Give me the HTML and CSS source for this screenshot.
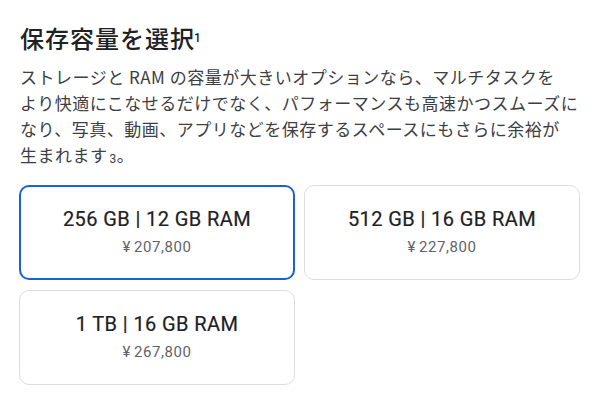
FILE: index.html
```html
<!DOCTYPE html>
<html lang="ja">
<head>
    <meta charset="UTF-8">
    <meta name="viewport" content="width=device-width, initial-scale=1.0">
    <title>保存容量を選択</title>
    <link rel="stylesheet" href="styles.css">
</head>
<body>
    <div class="storage">
        <h2 class="title">保存容量を選択<sup>1</sup></h2>
        <p class="desc">ストレージと RAM の容量が大きいオプションなら、マルチタスクを<br>より快適にこなせるだけでなく、パフォーマンスも高速かつスムーズに<br>なり、写真、動画、アプリなどを保存するスペースにもさらに余裕が<br>生まれます<sup>3</sup>。</p>
        <div class="options">
            <div class="option selected">
                <div class="name">256 GB | 12 GB RAM</div>
                <div class="price"><span class="yen">¥</span>207,800</div>
            </div>
            <div class="option">
                <div class="name">512 GB | 16 GB RAM</div>
                <div class="price"><span class="yen">¥</span>227,800</div>
            </div>
            <div class="option">
                <div class="name">1 TB | 16 GB RAM</div>
                <div class="price"><span class="yen">¥</span>267,800</div>
            </div>
        </div>
    </div>
</body>
</html>
```

FILE: styles.css
```css
body {
    margin: 0;
    background-color: #ffffff;
    font-family: Roboto, "Noto Sans CJK JP", sans-serif;
    color: #202124;
}
.storage {
    padding: 20px 18px 0 19px;
}
.title {
    margin: 0 0 0 1px;
    font-family: "Noto Sans CJK JP", sans-serif;
    font-size: 24px;
    font-weight: 500;
    line-height: 36px;
    letter-spacing: 1px;
}
.title sup {
    font-family: Roboto, sans-serif;
    font-size: 12px;
    vertical-align: 6px;
    line-height: 0;
    letter-spacing: 0;
    margin-left: -1px;
}
.desc {
    margin: 8px 0 0 1px;
    font-family: "Noto Sans CJK JP", sans-serif;
    font-size: 17px;
    line-height: 26px;
    letter-spacing: 0.5px;
    color: #3c4043;
    white-space: nowrap;
}
.desc sup {
    font-family: Roboto, sans-serif;
    font-size: 12px;
    vertical-align: -1px;
    line-height: 0;
    margin-left: 2px;
}
.options {
    display: grid;
    grid-template-columns: 1fr 1fr;
    gap: 10px 9px;
    margin-top: 17px;
}
.option {
    height: 95px;
    border: 1px solid #dadce0;
    border-radius: 10px;
    display: flex;
    flex-direction: column;
    justify-content: center;
    align-items: center;
    box-sizing: border-box;
    padding-bottom: 2px;
}
.option.selected {
    border: 2px solid #1a61d6;
}
.name {
    font-size: 20px;
    font-weight: 400;
    line-height: 28px;
    letter-spacing: 0.4px;
    color: #202124;
    -webkit-text-stroke: 0.2px #202124;
}
.price {
    margin-top: 2px;
    font-size: 15px;
    line-height: 24px;
    letter-spacing: 0.6px;
    color: #5f6368;
}
.yen {
    margin-right: 3px;
}
```
